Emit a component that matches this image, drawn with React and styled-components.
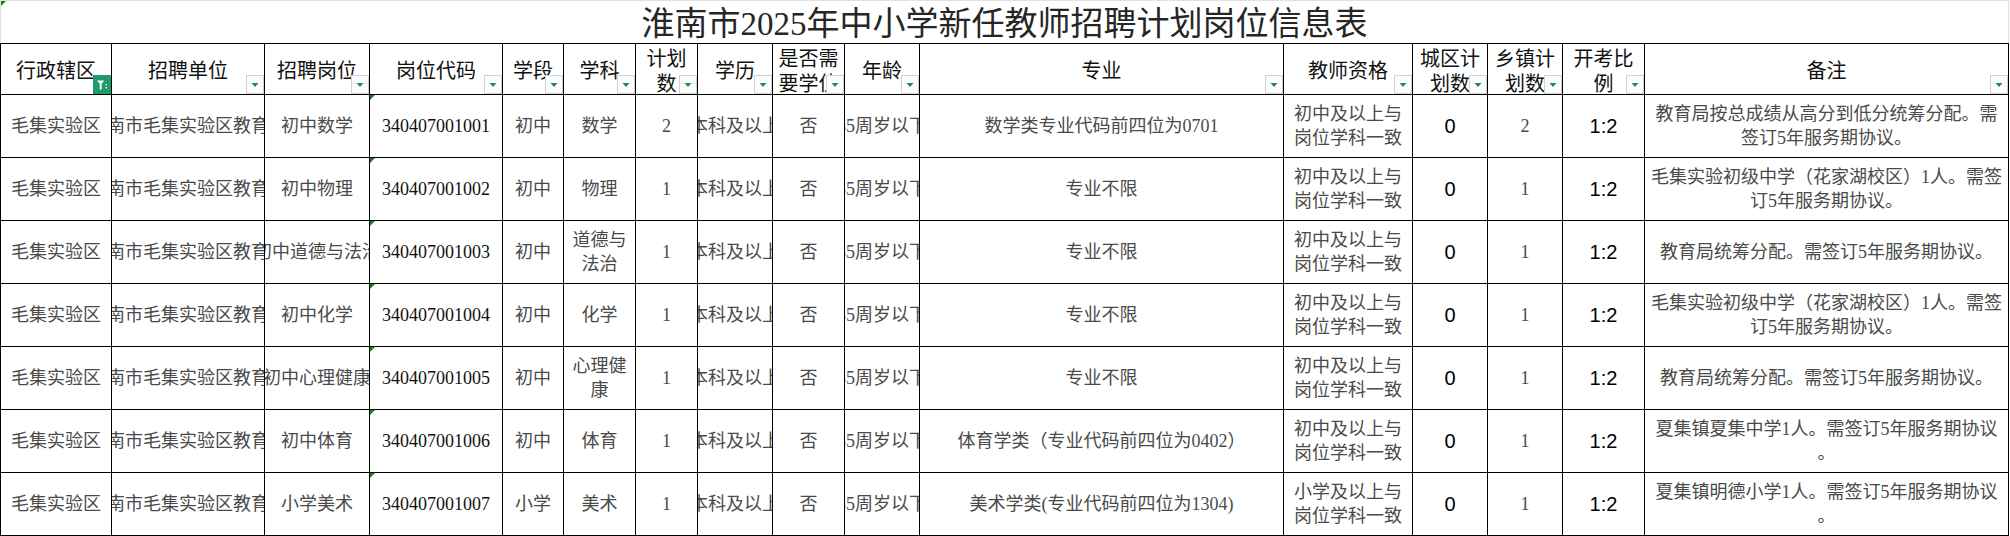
import React from 'react'
import styled, { createGlobalStyle, css } from 'styled-components'

const GlobalStyle = createGlobalStyle`
  html, body {
    margin: 0;
    padding: 0;
    background: #fff;
  }
  body {
    font-family: "Noto Sans CJK SC", sans-serif;
    text-spacing-trim: space-all;
  }
`

const COLS = [111, 153, 105, 133, 61, 72, 62, 75, 72, 75, 364, 129, 75, 75, 82, 364]

const SERIF = `"Liberation Serif", "Noto Sans CJK SC", serif`
const SANS = `"Liberation Sans", "Noto Sans CJK SC", sans-serif`

const Sheet = styled.div`
  width: 2009px;
`

const Title = styled.div`
  height: 43px;
  box-sizing: border-box;
  border-top: 1px solid #e1e1e1;
  border-left: 1px solid #e1e1e1;
  border-right: 1px solid #e1e1e1;
  display: flex;
  align-items: center;
  justify-content: center;
  padding-top: 3px;
  font-family: ${SERIF};
  font-size: 33px;
  line-height: 40px;
  color: #262626;
  position: relative;
  &::before {
    content: "";
    position: absolute;
    left: 0;
    top: 0;
    border-top: 5px solid #1f7a1f;
    border-right: 5px solid transparent;
  }
`

const Grid = styled.div`
  display: grid;
  grid-template-columns: ${COLS.map(c => c + 'px').join(' ')};
  grid-template-rows: 51px repeat(7, 63px);
  border-left: 1px solid #000;
  border-top: 1px solid #000;
`

const cellBase = css`
  box-sizing: border-box;
  border-right: 1px solid #000;
  border-bottom: 1px solid #000;
  position: relative;
  overflow: hidden;
  display: flex;
  align-items: center;
  justify-content: center;
`

const HeadCell = styled.div`
  ${cellBase}
  padding: 1px 4px 0;
  font-family: "Noto Sans CJK SC", sans-serif;
  font-size: 20px;
  line-height: 25px;
  color: #111;
  text-align: center;
`

const HeadText = styled.span`
  display: block;
  max-width: 100%;
`

const DropBtn = styled.span`
  position: absolute;
  right: 0;
  bottom: 0;
  width: 18px;
  height: 19px;
  box-sizing: border-box;
  border: 1px solid;
  background: ${p => (p.$active ? '#1f9a6a' : '#fdfdfd')};
  border-color: ${p => (p.$active ? '#1f9a6a' : '#d2d2d2')};
  display: flex;
  align-items: center;
  justify-content: center;
  svg {
    display: block;
  }
`

const DataCell = styled.div`
  ${cellBase}
  padding: ${p => p.$pad || '0'};
  font-family: ${p => (p.$sans ? SANS : SERIF)};
  font-size: ${p => (p.$sans ? '20px' : '18px')};
  color: ${p => (p.$sans ? '#000' : '#4a4a4a')};
  line-height: 24px;
  text-align: center;
  ${p => p.$mark && css`
    &::before {
      content: "";
      position: absolute;
      left: 0;
      top: 0;
      border-top: 5px solid #1f7a1f;
      border-right: 5px solid transparent;
    }
  `}
`

const Clip = styled.span`
  white-space: nowrap;
  flex-shrink: 0;
`

const Wrap = styled.span`
  display: block;
  width: 100%;
  white-space: normal;
  line-break: ${p => (p.$anywhere ? 'anywhere' : 'auto')};
`

const Code = styled.span`
  color: #111;
`

const DropArrow = () => (
  <svg width="16" height="17" viewBox="0 0 16 17">
    <polygon points="4.5,7 11.5,7 8,11" fill="#1f8a5c" />
  </svg>
)

const FilterIcon = () => (
  <svg width="18" height="19" viewBox="0 0 18 19">
    <polygon points="3.5,5 11.5,5 8.5,9 8.5,15 6.5,15 6.5,9" fill="#fff" />
    <rect x="13" y="9" width="1.6" height="1.6" fill="#fff" />
    <rect x="13" y="12.4" width="1.6" height="1.6" fill="#fff" />
  </svg>
)

const headers = [
  '行政辖区', '招聘单位', '招聘岗位', '岗位代码', '学段', '学科', '计划数', '学历',
  '是否需要学位', '年龄', '专业', '教师资格', '城区计划数', '乡镇计划数', '开考比例', '备注'
]

const rows = [
  { post: '初中数学', code: '340407001001', stage: '初中', subject: '数学', plan: '2', major: '数学类专业代码前四位为0701', qual: '初中及以上与岗位学科一致', town: '2', note: '教育局按总成绩从高分到低分统筹分配。需签订5年服务期协议。' },
  { post: '初中物理', code: '340407001002', stage: '初中', subject: '物理', plan: '1', major: '专业不限', qual: '初中及以上与岗位学科一致', town: '1', note: '毛集实验初级中学（花家湖校区）1人。需签订5年服务期协议。' },
  { post: '初中道德与法治', code: '340407001003', stage: '初中', subject: '道德与法治', plan: '1', major: '专业不限', qual: '初中及以上与岗位学科一致', town: '1', note: '教育局统筹分配。需签订5年服务期协议。' },
  { post: '初中化学', code: '340407001004', stage: '初中', subject: '化学', plan: '1', major: '专业不限', qual: '初中及以上与岗位学科一致', town: '1', note: '毛集实验初级中学（花家湖校区）1人。需签订5年服务期协议。' },
  { post: '初中心理健康', code: '340407001005', stage: '初中', subject: '心理健康', plan: '1', major: '专业不限', qual: '初中及以上与岗位学科一致', town: '1', note: '教育局统筹分配。需签订5年服务期协议。' },
  { post: '初中体育', code: '340407001006', stage: '初中', subject: '体育', plan: '1', major: '体育学类（专业代码前四位为0402）', qual: '初中及以上与岗位学科一致', town: '1', note: '夏集镇夏集中学1人。需签订5年服务期协议。' },
  { post: '小学美术', code: '340407001007', stage: '小学', subject: '美术', plan: '1', major: '美术学类(专业代码前四位为1304)', qual: '小学及以上与岗位学科一致', town: '1', note: '夏集镇明德小学1人。需签订5年服务期协议。' },
]

const App = () => {
  return (
    <Sheet>
      <GlobalStyle />
      <Title>淮南市2025年中小学新任教师招聘计划岗位信息表</Title>
      <Grid>
        {headers.map((h, i) => (
          <HeadCell key={h}>
            <HeadText>{h}</HeadText>
            <DropBtn $active={i === 0}>
              {i === 0 ? <FilterIcon /> : <DropArrow />}
            </DropBtn>
          </HeadCell>
        ))}
        {rows.map(r => (
          <React.Fragment key={r.code}>
            <DataCell><Clip>毛集实验区</Clip></DataCell>
            <DataCell><Clip>淮南市毛集实验区教育局</Clip></DataCell>
            <DataCell><Clip>{r.post}</Clip></DataCell>
            <DataCell $mark><Code>{r.code}</Code></DataCell>
            <DataCell>{r.stage}</DataCell>
            <DataCell $pad="0 1px"><Wrap>{r.subject}</Wrap></DataCell>
            <DataCell>{r.plan}</DataCell>
            <DataCell><Clip>本科及以上</Clip></DataCell>
            <DataCell>否</DataCell>
            <DataCell><Clip>35周岁以下</Clip></DataCell>
            <DataCell><Clip>{r.major}</Clip></DataCell>
            <DataCell $pad="0 8px"><Wrap>{r.qual}</Wrap></DataCell>
            <DataCell $sans>0</DataCell>
            <DataCell>{r.town}</DataCell>
            <DataCell $sans>1:2</DataCell>
            <DataCell $pad="0 5px"><Wrap $anywhere>{r.note}</Wrap></DataCell>
          </React.Fragment>
        ))}
      </Grid>
    </Sheet>
  )
}

export default App
